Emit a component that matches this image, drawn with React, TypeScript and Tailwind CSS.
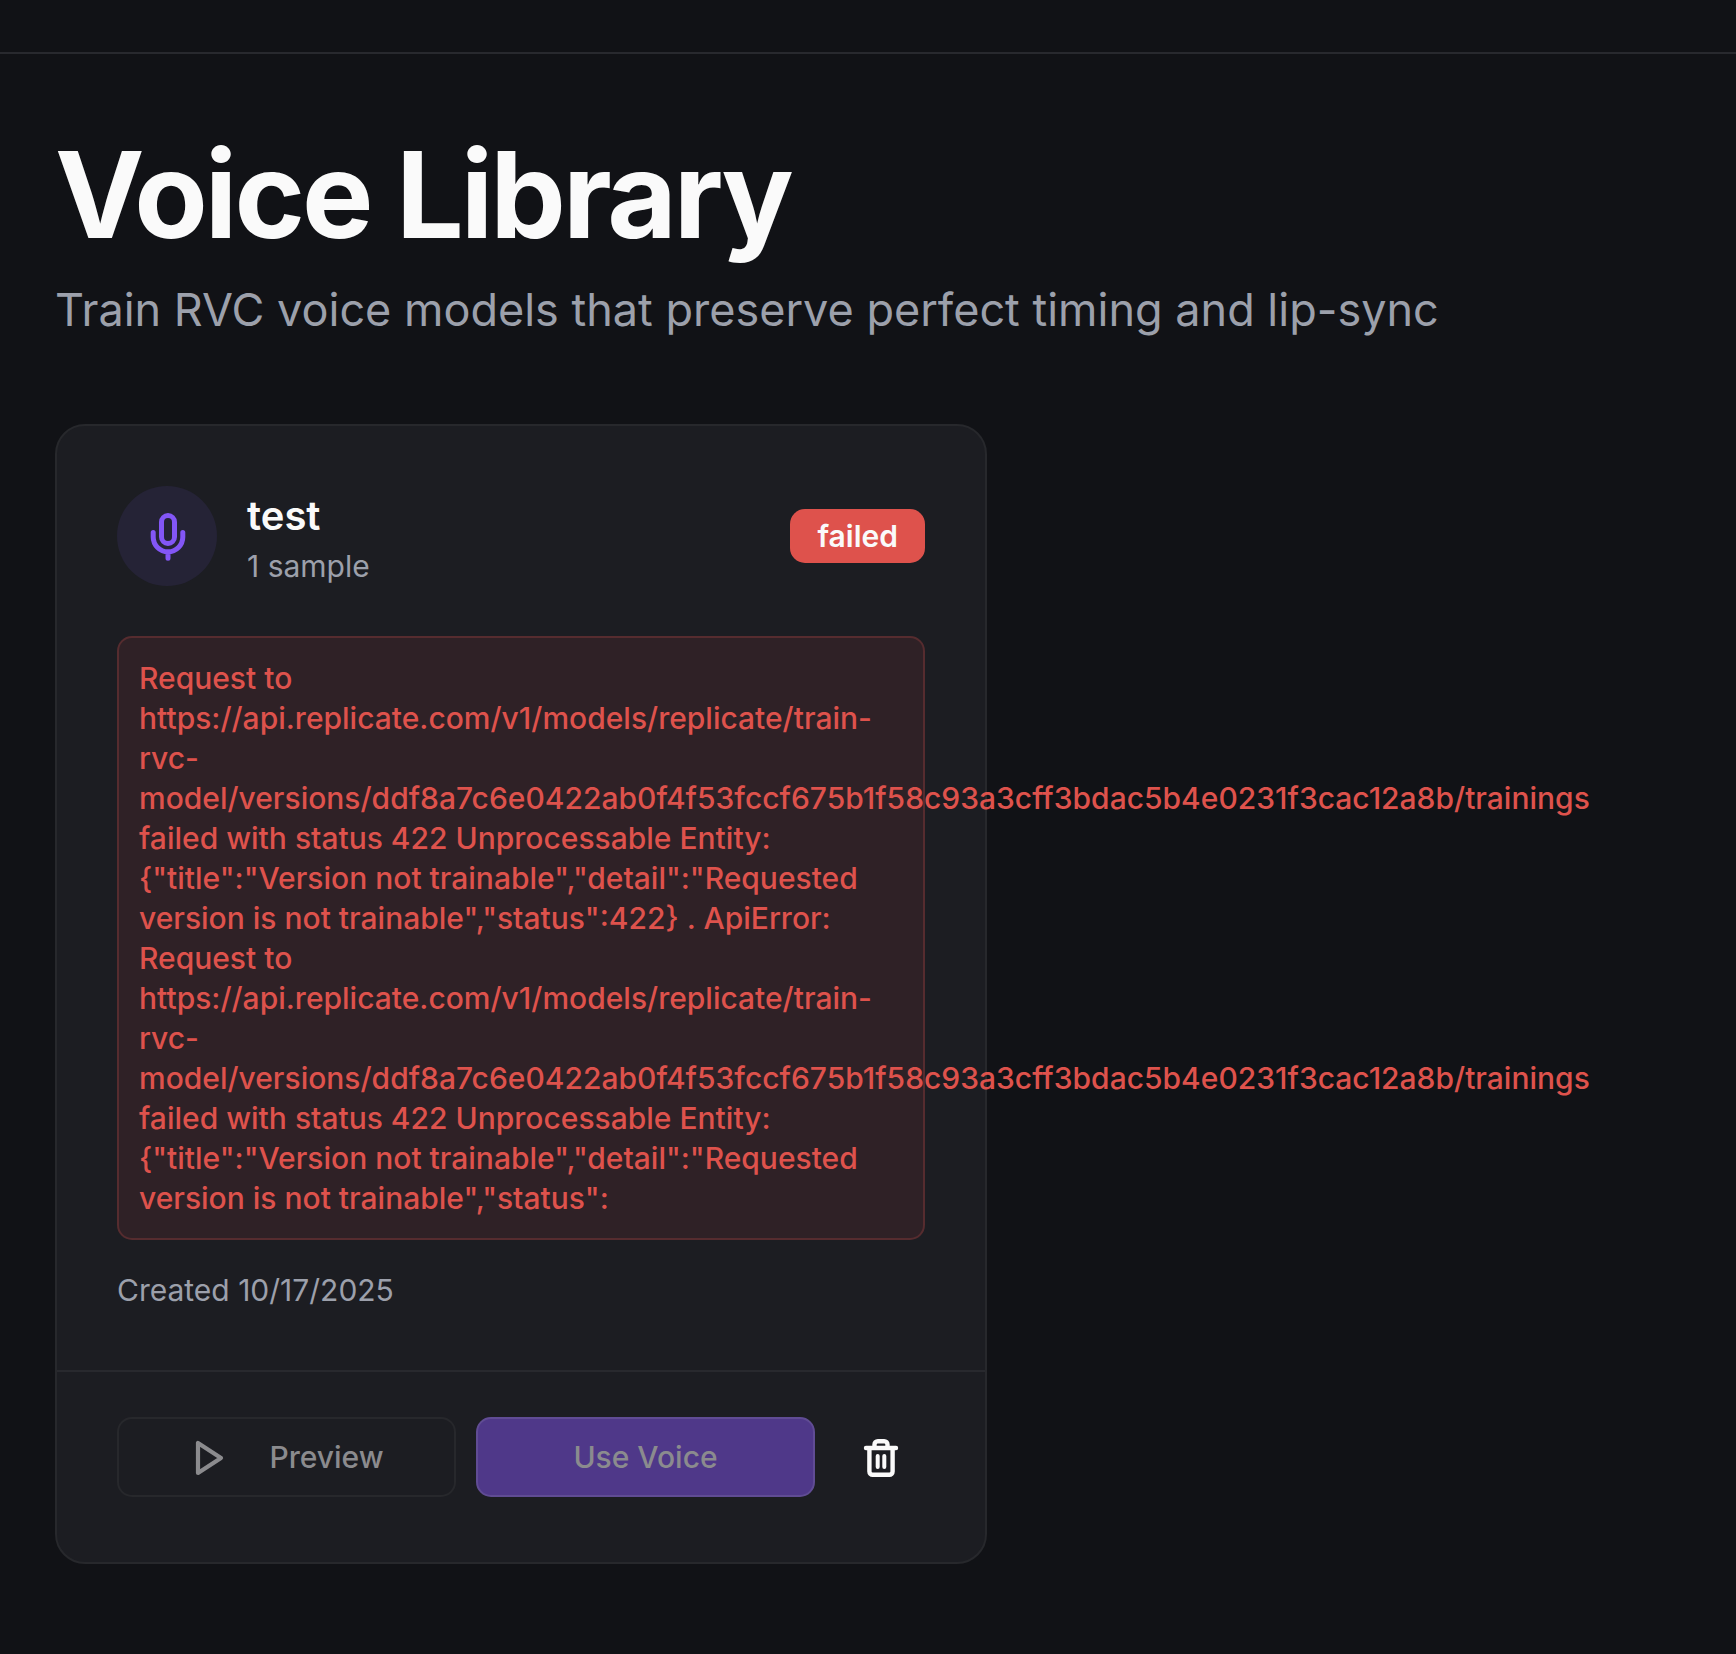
import React from "react";

const VERSION = "ddf8a7c6e0422ab0f4f53fccf675b1f58c93a3cff3bdac5b4e0231f3cac12a8b";
const REQUEST = `Request to https://api.replicate.com/v1/models/replicate/train-rvc-model/versions/${VERSION}/trainings failed with status 422 Unprocessable Entity: {"title":"Version not trainable","detail":"Requested version is not trainable","status":`;
const ERROR = `${REQUEST}422} . ApiError: ${REQUEST}`;

function MicIcon() {
  return (
    <svg viewBox="0 0 40 52" className="h-[52px] w-10" fill="none" stroke="currentColor" strokeWidth="5" strokeLinecap="round" strokeLinejoin="round" aria-hidden="true">
      <rect x="14.5" y="5.5" width="13" height="28" rx="6.5" />
      <path d="M6.200 22.500v4.500a14.800 14.800 0 0 0 29.600 0v-4.500M21 42v6.200" />
    </svg>
  );
}

function PlayIcon() {
  return (
    <svg viewBox="0 0 40 40" className="size-10" fill="none" stroke="currentColor" strokeWidth="4.200" strokeLinejoin="round" aria-hidden="true">
      <path d="M9 6v30l23-15z" />
    </svg>
  );
}

function TrashIcon() {
  return (
    <svg viewBox="0 0 40 44" className="h-11 w-10" fill="none" stroke="currentColor" strokeWidth="4.400" strokeLinecap="round" strokeLinejoin="round" aria-hidden="true">
      <path d="M6 13h30M9.400 13v23.500a3.300 3.300 0 0 0 3.300 3.300h16.600a3.300 3.300 0 0 0 3.300-3.300V13M14.500 13V9.500a3.300 3.300 0 0 1 3.300-3.300h6.400a3.300 3.300 0 0 1 3.300 3.300V13" />
      <path strokeWidth="4" d="M17.700 21v11M24.300 21v11" />
    </svg>
  );
}

export default function App() {
  return (
    <div className="min-h-screen bg-[#111216] font-['Inter',sans-serif] text-[#fafafa]">
      <header className="h-[54px] border-b-2 border-[#28292e]" />
      <main className="px-[55px] pt-[71px]">
        <h1 className="text-[120px] leading-[140px] font-bold tracking-tight">Voice Library</h1>
        <p className="mt-[15px] text-[45px] leading-[60px] text-[#9ca0ab]">
          Train RVC voice models that preserve perfect timing and lip-sync
        </p>
        <article className="mt-[84px] w-full max-w-[932px] rounded-[30px] border-2 border-[#27282c] bg-[#1c1d22] text-[30px] leading-10">
          <div className="p-[60px]">
            <div className="flex items-center gap-[30px]">
              <div className="flex size-[100px] items-center justify-center rounded-full bg-[#252336] text-[#8356f6]">
                <MicIcon />
              </div>
              <div className="flex-1">
                <h2 className="text-[40px] leading-[60px] font-semibold">test</h2>
                <p className="text-[#9ca0ab]">1 sample</p>
              </div>
              <span className="rounded-[15px] bg-[#de524c] px-[27px] py-[7px] font-semibold">failed</span>
            </div>
            <div className="mt-[50px] rounded-[15px] border-2 border-[#562c2f] bg-[#2f2126] p-5 font-medium text-[#de524c]">
              <p>{ERROR}</p>
            </div>
            <p className="mt-[30px] text-[#9ca0ab]">Created 10/17/2025</p>
          </div>
          <footer className="flex gap-5 border-t-2 border-[#28292e] px-[60px] pt-[45px] pb-[65px] font-medium">
            <button type="button" disabled className="flex h-20 flex-1 items-center justify-center gap-10 rounded-[15px] border-2 border-[#27282c] text-[#8b8b8e]">
              <PlayIcon />
              Preview
            </button>
            <button type="button" disabled className="h-20 flex-1 rounded-[15px] border-2 border-[#604c94] bg-[#4f3889] text-[#8b8b8e]">
              Use Voice
            </button>
            <button type="button" aria-label="Delete voice" className="flex h-20 w-[90px] items-center justify-center rounded-[15px]">
              <TrashIcon />
            </button>
          </footer>
        </article>
      </main>
    </div>
  );
}
